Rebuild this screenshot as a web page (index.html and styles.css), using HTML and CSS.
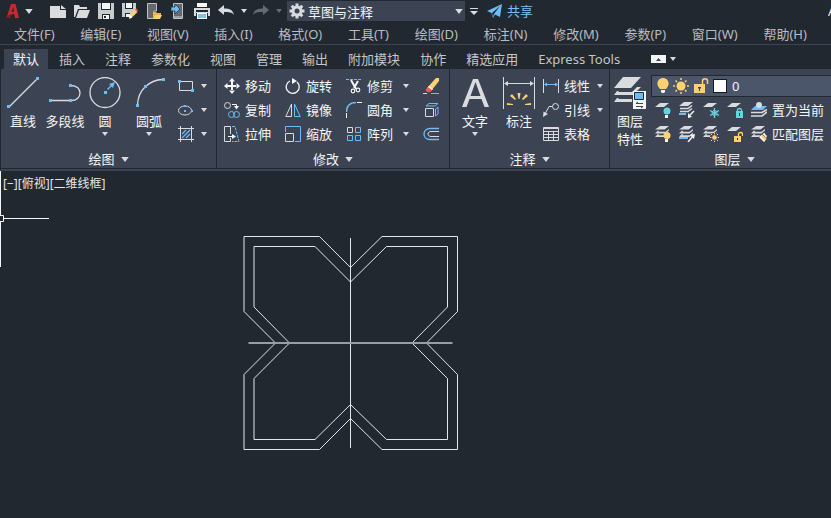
FILE: index.html
```html
<!DOCTYPE html>
<html lang="zh-CN">
<head>
<meta charset="utf-8">
<title>草图与注释</title>
<link rel="stylesheet" href="styles.css">
</head>
<body>
<svg class="defs" aria-hidden="true">
  <symbol id="caret" viewBox="0 0 6 4"><path d="M0 0h6L3 4z" fill="currentColor"/></symbol>
  <symbol id="sheets" viewBox="0 0 16 16"><path d="M6 0h10l-5 4H0zM3 5.500h2l-1 1h8l4-3v1.500l-4 3.500H0zM3 9.500h2l-1 1h8l4-3V9l-4 3.500H0z" fill="#d9dbde"/></symbol>
</svg>

<header class="titlebar">
  <button class="app" aria-label="应用程序菜单"><svg width="16" height="16" viewBox="0 0 16 16"><path d="M1.500 15 6 1h4.500l3.500 14h-4l-.8-4.200L5.500 12l-1 3z" fill="#c52a2e"/><path d="M6.500 9.200 8.200 4l.9 4.500z" fill="#222830"/><path d="m1.500 15 2-3 5-2-3.500 2-1 3z" fill="#8f1418"/></svg><svg class="caret big"><use href="#caret"/></svg></button>
  <button class="tool" aria-label="新建"><svg width="16" height="16"><path d="M0 3h10v4h6v8H0z" fill="#d9dbde"/><path d="m11 2 5 4h-5z" fill="#d9dbde"/></svg></button>
  <button class="tool" aria-label="打开"><svg width="16" height="16"><path d="M0 2h5l1 2h7v2H4L1 14H0z" fill="#d9dbde"/><path d="M5 7h11l-3 8H2z" fill="#d9dbde"/></svg></button>
  <button class="tool" aria-label="保存"><svg width="16" height="16"><path d="M0 0h16v16H0z" fill="#c9cccf"/><path d="M3 0h10v7H3zM4 11h8v5H4z" fill="#222830"/><path d="M4 0h8v6H4zM5 12h6v4H5z" fill="#f4f5f6"/><path d="M6 13h2v2H6z" fill="#222830"/></svg></button>
  <button class="tool" aria-label="另存为"><svg width="16" height="16"><path d="M0 0h14v8l-6 6H0z" fill="#c9cccf"/><path d="M3 0h8v6H3zM3 10h5v5H3z" fill="#222830"/><path d="M4 0h6v5H4zM4 11h4v3H4z" fill="#f4f5f6"/><path d="m7 15 1.500-4L13 6.500l2.500 2.500L11 13.500z" fill="#ffcf73"/><path d="m13 6.500 1.500-1L16 7.500 15 9z" fill="#f05a4f"/><path d="m7 16 1-4 2.500 2.500z" fill="#fff"/></svg></button>
  <button class="tool" aria-label="从移动设备打开"><svg width="16" height="16"><path d="M1.500.500h9V8H8v7.500H1.500z" fill="#666a70" stroke="#bfc2c6"/><path d="M7 9h3l1 1h4v2h-4l-3 4H7z" fill="#e8b45a"/><path d="M9.500 12H16l-2 4H7.500z" fill="#ffcf73"/></svg></button>
  <button class="tool" aria-label="保存到移动设备"><svg width="16" height="16"><path d="M3.500.500h9v15h-9z" fill="#666a70" stroke="#bfc2c6"/><path d="M4 13h8v2H4z" fill="#9b9ea3"/><path d="M1 4h4V1l5 5-5 5V8H1z" fill="#6cbcf7" stroke="#222830" stroke-width=".7"/></svg></button>
  <button class="tool" aria-label="打印"><svg width="16" height="16"><path d="M3 0h10v4H3z" fill="#f6f6f6"/><path d="M0 5h16v8H0z" fill="#d9dbde"/><path d="M2 7h12v2H2zM2 10h12v6H2z" fill="#222830"/><path d="M3 10h10v6H3z" fill="#fff"/><path d="M4 11h8v4H4z" fill="#7cc4f5"/></svg></button>
  <button class="tool" aria-label="放弃"><svg width="16" height="12"><path d="m0 5 6-5v3.500c5 0 9 1 10 6.500-2-3-5-3-10-3V10z" fill="#d9dbde"/></svg></button>
  <button class="drop" aria-label="放弃列表"><svg class="caret"><use href="#caret"/></svg></button>
  <button class="tool off" aria-label="重做"><svg width="16" height="12"><path d="m16 5-6-5v3.500c-5 0-9 1-10 6.500 2-3 5-3 10-3V10z" fill="currentColor"/></svg></button>
  <button class="drop off" aria-label="重做列表"><svg class="caret"><use href="#caret"/></svg></button>
  <label class="workspace">
    <svg width="16" height="16" viewBox="-8 -8 16 16" aria-label="工作空间"><g fill="#d9dbde"><path id="cog" d="M-1.500-7.500h3v15h-3z"/><use href="#cog" transform="rotate(45)"/><use href="#cog" transform="rotate(90)"/><use href="#cog" transform="rotate(135)"/><circle r="5.500"/></g><circle r="2.500" fill="#3c4453"/></svg>
    <select><option>草图与注释</option></select>
    <svg class="caret big"><use href="#caret"/></svg>
  </label>
  <button class="custom" aria-label="自定义快速访问工具栏"><svg width="8" height="7"><path d="M0 0h8v1H0zM0 3h8L4 7z" fill="#d9dbde"/></svg></button>
  <a class="share" href="#"><svg width="16" height="15"><path d="M0 7 15 0l-2 13-5-2.500L6 14l-1.500-5z" fill="#6cbcf7"/><path d="m5 9 8-7-6 8-1 3z" fill="#222830"/></svg>共享</a>
  <span class="title">A</span>
</header>

<nav class="menubar">
  <button>文件(F)</button><button>编辑(E)</button><button>视图(V)</button><button>插入(I)</button><button>格式(O)</button><button>工具(T)</button><button>绘图(D)</button><button>标注(N)</button><button>修改(M)</button><button>参数(P)</button><button>窗口(W)</button><button>帮助(H)</button>
</nav>

<nav class="tabs">
  <button class="active">默认</button><button>插入</button><button>注释</button><button>参数化</button><button>视图</button><button>管理</button><button>输出</button><button>附加模块</button><button>协作</button><button>精选应用</button><button>Express Tools</button>
  <button class="minimize" aria-label="最小化功能区"><svg width="15" height="8"><path d="M0 0h15v8H0z" fill="#f4f4f4"/><path d="m5 6 2.500-3L10 6z" fill="#3c4453"/></svg><svg class="caret"><use href="#caret"/></svg></button>
</nav>

<div class="ribbon">
  <section class="panel">
    <div class="tools">
      <button class="large"><svg width="32" height="32"><path d="m2 30 28-28" stroke="#d9dbde" stroke-width="1.300"/><path d="M0 28h3v3H0zM29 0h3v3h-3z" fill="#6cbcf7"/></svg>直线</button>
      <button class="large mid"><svg width="32" height="32"><path d="M2 23.500h20c12 0 12-15 0-15" fill="none" stroke="#d9dbde" stroke-width="1.300"/><path d="M0 22h3v3H0zM20 22h3v3h-3zM20 7h3v3h-3z" fill="#6cbcf7"/></svg>多段线</button>
      <button class="large mid"><svg width="32" height="32"><circle cx="16" cy="15.500" r="15" fill="none" stroke="#d9dbde" stroke-width="1.300"/><path d="M15 14h3v3h-3zM18 12l4-4 1 1-4 4zM20 7l6-2-2 6z" fill="#6cbcf7"/></svg>圆<svg class="caret"><use href="#caret"/></svg></button>
      <button class="large wide"><svg width="32" height="32"><path d="M4.500 28C5 13 16 3 30 2.500" fill="none" stroke="#d9dbde" stroke-width="1.300"/><path d="M3 27h3v3H3zM11 8h3v3h-3zM29 1h3v3h-3z" fill="#6cbcf7"/></svg>圆弧<svg class="caret"><use href="#caret"/></svg></button>
      <div class="column shapes">
        <button class="small" aria-label="矩形"><svg width="16" height="16"><path d="M1.500 3.500h13v9h-13z" fill="none" stroke="#d9dbde"/><path d="M0 2h3v3H0zM13 11h3v3h-3z" fill="#6cbcf7"/></svg><svg class="caret"><use href="#caret"/></svg></button>
        <button class="small" aria-label="椭圆"><svg width="16" height="16"><ellipse cx="7" cy="8.500" rx="6.500" ry="4.500" fill="none" stroke="#d9dbde"/><path d="M6 3h2v2H6zM6 8h2v2H6zM13 8h2v2h-2z" fill="#6cbcf7"/></svg><svg class="caret"><use href="#caret"/></svg></button>
        <button class="small" aria-label="图案填充"><svg width="16" height="16"><path d="M0 2.500h16M0 13.500h16M2.500 0v16M13.500 0v16" stroke="#d9dbde"/><path d="m4 8 4-4M4 12l8-8M8 12l4-4" stroke="#6cbcf7" stroke-width="1.300"/></svg><svg class="caret"><use href="#caret"/></svg></button>
      </div>
    </div>
    <button class="footer">绘图<svg class="caret big"><use href="#caret"/></svg></button>
  </section>

  <section class="panel modify">
    <div class="tools">
      <div class="column">
        <button class="small"><svg width="16" height="16" fill="#f4f5f6"><path d="M7 3h2v4h4v2H9v4H7V9H3V7h4zM8 0l3 3.500H5zM8 16l3-3.500H5zM0 8l3.500-3v6zM16 8l-3.500-3v6z"/></svg>移动</button>
        <button class="small"><svg width="16" height="16" fill="none"><circle cx="3.500" cy="3.500" r="3" stroke="#d9dbde"/><circle cx="7.500" cy="12.500" r="3" stroke="#6cbcf7"/><circle cx="12.500" cy="12.500" r="3" stroke="#6cbcf7"/><path d="M8 2.500h4.500V5" stroke="#f4f5f6"/><path d="M10 4h5l-2.500 3.500z" fill="#f4f5f6"/></svg>复制</button>
        <button class="small"><svg width="16" height="16" fill="none"><path d="M6.500 8V.5h-6v15h6V12" stroke="#d9dbde"/><path d="M8 .5h3l4 15H8" stroke="#6cbcf7" stroke-dasharray="3 1"/><path d="M4 10.500h5" stroke="#f4f5f6"/><path d="m8 8 4 2.500L8 13z" fill="#f4f5f6"/></svg>拉伸</button>
      </div>
      <div class="column">
        <button class="small"><svg width="16" height="16" fill="none"><path d="M5 3a6.500 6.500 0 1 0 7 1" stroke="#f4f5f6" stroke-width="1.300"/><path d="M7 0v6l5-3z" fill="#f4f5f6"/></svg>旋转</button>
        <button class="small"><svg width="16" height="16" fill="none"><path d="M6.500 2v12.500H.8z" stroke="#d9dbde"/><path d="M9.500 2v12.500h5.700z" stroke="#6cbcf7"/></svg>镜像</button>
        <button class="small"><svg width="16" height="16" fill="none"><path d="M.5 6V.5h15v15H10" stroke="#6cbcf7"/><path d="M.5 7.500h8v8h-8z" stroke="#d9dbde"/></svg>缩放</button>
      </div>
      <div class="column trim">
        <button class="small"><svg width="16" height="16" fill="none"><path d="M0 1.500h16" stroke="#6cbcf7" stroke-dasharray="3 1"/><path d="m5 2 5 9M12 3l-4 7" stroke="#f4f5f6" stroke-width="2"/><circle cx="7" cy="13" r="1.800" stroke="#f4f5f6" stroke-width="1.200"/><circle cx="12" cy="12" r="1.800" stroke="#f4f5f6" stroke-width="1.200"/></svg>修剪<svg class="caret"><use href="#caret"/></svg></button>
        <button class="small"><svg width="16" height="16" fill="none"><path d="M.5 10C.5 4 4 .5 10 .5" stroke="#6cbcf7" stroke-width="1.300"/><path d="M11 .5h5M.5 11v5" stroke="#f4f5f6"/></svg>圆角<svg class="caret"><use href="#caret"/></svg></button>
        <button class="small"><svg width="16" height="16" fill="none"><path d="M1.500 1.500h5v5h-5z" stroke="#d9dbde"/><path d="M9.500 1.500h5v5h-5zM1.500 9.500h5v5h-5zM9.500 9.500h5v5h-5z" stroke="#6cbcf7"/></svg>阵列<svg class="caret"><use href="#caret"/></svg></button>
      </div>
      <div class="column">
        <button class="small" aria-label="删除"><svg width="16" height="16"><path d="M13 0h3v3L8 13l-4-3z" fill="#ffcf73"/><path d="m5.500 8.500 4 3L7 14c-2 1-5-1-4-3z" fill="#f05a4f"/><path d="m5 9 1-1 4 3-1 1z" fill="#fff"/><path d="M0 15.500h4" stroke="#d9dbde"/><path d="M8 15.500h8" stroke="#6cbcf7"/></svg></button>
        <button class="small" aria-label="分解"><svg width="16" height="16" fill="none"><path d="M2.500 6.500h8v8h-8z" stroke="#d9dbde"/><path d="m3 4 3-2.500h9L12 4zM12.500 7 15 5v7l-2.500 2z" stroke="#6cbcf7"/></svg></button>
        <button class="small" aria-label="偏移"><svg width="16" height="16" fill="none"><path d="M16 2.500H7c-8 0-8 11 0 11h9" stroke="#6cbcf7" stroke-width="1.300"/><path d="M16 5.500H8c-4 0-4 5 0 5h8" stroke="#d9dbde"/></svg></button>
      </div>
    </div>
    <button class="footer">修改<svg class="caret big"><use href="#caret"/></svg></button>
  </section>

  <section class="panel annotate">
    <div class="tools">
      <button class="large"><svg width="32" height="32"><path d="M3 30 14 2h5l11 28h-4.500l-3-8h-12l-3 8zM11.500 19h10l-5-14z" fill="#d9dbde"/></svg>文字<svg class="caret"><use href="#caret"/></svg></button>
      <button class="large"><svg width="32" height="32"><path d="M.5 0v32M31.500 0v32M2 6.500h28" stroke="#d9dbde"/><path d="m1 6.500 4-2.500v5zM31 6.500 27 4v5z" fill="#d9dbde"/><path d="M14.500 16h3l-1 6h-1zM7 19l2-2 4 5-1 1zM25 19l-2-2-4 5 1 1zM4 26l6 1v1H4zM28 26l-6 1v1h6z" fill="#ffcf73"/></svg>标注</button>
      <div class="column linear">
        <button class="small"><svg width="16" height="16"><path d="M.5 1v14M15.500 1v14" stroke="#d9dbde"/><path d="M2 6.500h12" stroke="#6cbcf7"/><path d="m1 6.500 3-2v4zM15 6.500l-3-2v4z" fill="#6cbcf7"/></svg>线性<svg class="caret"><use href="#caret"/></svg></button>
        <button class="small"><svg width="16" height="16" fill="none"><circle cx="12.500" cy="4.500" r="3" stroke="#d9dbde"/><path d="M9.500 4.500H6L2 12" stroke="#d9dbde"/><path d="m0 15 .500-5.500L5 12z" fill="#d9dbde"/></svg>引线<svg class="caret"><use href="#caret"/></svg></button>
        <button class="small"><svg width="16" height="16" fill="none"><path d="M.5 1.500h15v13H.5zM0 2.500h16M0 5.500h16M0 8.500h16M0 11.500h16M5.500 5v9M10.500 5v9" stroke="#d9dbde"/></svg>表格</button>
      </div>
    </div>
    <button class="footer">注释<svg class="caret big"><use href="#caret"/></svg></button>
  </section>

  <section class="panel layers">
    <div class="tools">
      <button class="large mid"><svg width="32" height="32"><path d="M9 0h18L17 11H0zM3 14h2l-1 1h14l5-5h4l-8 8H0zM3 21h2l-1 1h14v3H0z" fill="#d9dbde"/><path d="M19 14h13v18H19z" fill="#f4f5f6"/><path d="M20.500 15.500h9v7h-9z" fill="#6cbcf7" stroke="#222830"/><path d="M22 26.500h7M22 29.500h7M24 25l-2 1.500M27 31l2-1.500" stroke="#3c4453"/></svg>图层<br>特性</button>
      <div class="layer-tools">
        <label class="layer-select">
          <svg width="12" height="16"><path d="M3 11C-2 6 1 0 6 0s8 6 3 11z" fill="#ffcf73"/><path d="M4 12h4v2l-1 1H5l-1-1z" fill="#f4f5f6"/></svg>
          <svg width="16" height="16" viewBox="-8 -8 16 16"><circle r="4.500" fill="#ffcf73"/><path d="M0-8v2M0 6v2M-8 0h2M6 0h2M-5.500-5.500l1.500 1.500M4 4l1.500 1.500M-5.500 5.500 -4 4M4-4l1.500-1.500" stroke="#ffcf73" stroke-width="1.500"/></svg>
          <svg width="16" height="16"><path d="M9.500 7V3c0-3 5-3 5 0v3" fill="none" stroke="#ffcf73" stroke-width="1.500"/><path d="M1 6h11v9H1z" fill="#ffcf73"/><path d="M5 9h3v1.500H7V13H6v-2.500H5z" fill="#3c4453"/></svg>
          <span class="swatch"></span>
          <select aria-label="图层"><option>0</option></select>
        </label>
        <div class="row">
          <button class="icon" aria-label="关"><svg width="16" height="16"><path d="M5 1h9L9 5H0z" fill="#d9dbde"/><circle cx="12" cy="9" r="3.500" fill="#66d5dd"/><path d="M10 13h3v3h-3z" fill="#f4f5f6"/></svg></button>
          <button class="icon" aria-label="隔离"><svg width="16" height="16"><path d="M5 0h9L9 4H0z" fill="#d9dbde"/><path d="m1 6.500 8 0 4-3M1 9.500h8l4-3" fill="none" stroke="#d9dbde" stroke-width="1.500"/><path d="M0 12h7" stroke="#6cbcf7" stroke-width="2"/><path d="m15 9-4 4" stroke="#f4f5f6" stroke-width="1.500"/><path d="m9 11 4 4-4 1z" fill="#f4f5f6"/></svg></button>
          <button class="icon" aria-label="冻结"><svg width="16" height="16"><path d="M5 1h9L9 5H0z" fill="#d9dbde"/><path d="M11.500 6v10M7 8.500l9 5M7 13.500l9-5" stroke="#66d5dd" stroke-width="1.300"/><circle cx="11.500" cy="11" r="2.500" fill="none" stroke="#66d5dd"/></svg></button>
          <button class="icon" aria-label="锁定"><svg width="16" height="16"><path d="M5 1h9L9 5H0z" fill="#d9dbde"/><path d="M10.500 10V8c0-2 4-2 4 0v2" fill="none" stroke="#66d5dd" stroke-width="1.300"/><path d="M9 9h7v7H9z" fill="#66d5dd"/><path d="M12 11h1v3h-1z" fill="#222830"/></svg></button>
          <button class="small"><svg width="16" height="16"><path d="M4 4h12l-4 4H0z" fill="#6cbcf7"/><circle cx="8" cy="3" r="3" fill="#d9dbde"/><path d="M0 10.500h11l5-3M0 14h11l5-4" fill="none" stroke="#d9dbde" stroke-width="1.700"/></svg>置为当前</button>
        </div>
        <div class="row">
          <button class="icon" aria-label="打开所有图层"><svg width="16" height="16"><use href="#sheets" width="14" height="14"/><circle cx="12" cy="9.500" r="3.500" fill="#ffcf73"/><path d="M10 13h3v3h-3z" fill="#f4f5f6"/></svg></button>
          <button class="icon" aria-label="取消隔离"><svg width="16" height="16"><use href="#sheets" width="14" height="14"/><path d="M0 12h9" stroke="#6cbcf7" stroke-width="2"/><path d="m9 16 5-6" stroke="#f4f5f6" stroke-width="1.500"/><path d="m11 9 5-1-1 5z" fill="#f4f5f6"/></svg></button>
          <button class="icon" aria-label="解冻所有图层"><svg width="16" height="16"><use href="#sheets" width="14" height="14"/><path d="M11.500 7v9M7 11.500h9M8 8l7 7M8 15l7-7" stroke="#3c4453" stroke-width="3"/><path d="M11.500 7v9M7 11.500h9M8 8l7 7M8 15l7-7" stroke="#ffcf73"/><circle cx="11.500" cy="11.500" r="2.800" fill="#ffcf73" stroke="#3c4453"/></svg></button>
          <button class="icon" aria-label="解锁"><svg width="16" height="16"><path d="M5 1h9L9 5H0z" fill="#d9dbde"/><path d="M11.500 11V8c0-2 4-2 4 0v2" fill="none" stroke="#ffcf73" stroke-width="1.300"/><path d="M7 10h7v6H7z" fill="#ffcf73"/><path d="M10 12h1v2h-1z" fill="#222830"/></svg></button>
          <button class="small"><svg width="16" height="16"><use href="#sheets" width="14" height="14"/><path d="m8 11 3-3 5 5-3 3z" fill="#ffcf73" stroke="#3c4453" stroke-width=".5"/><path d="m12 8 1-1 3 3-1 2zM8 11l2-1 4 5-1 1z" fill="#f4f5f6"/></svg>匹配图层</button>
        </div>
      </div>
    </div>
    <button class="footer">图层<svg class="caret big"><use href="#caret"/></svg></button>
  </section>
</div>

<main class="canvas">
  <div class="view-label"><button>[−]</button><button>[俯视]</button><button>[二维线框]</button></div>
  <svg class="crosshair" width="50" height="96" fill="none" stroke="#f4f5f6"><path d="M.5 0v44M.5 51v45M4 47.500h45"/><path d="M-1 44.500h4.500v6H-1z"/></svg>
  <svg class="drawing" width="216" height="216" fill="none" stroke="#e4e6e8">
    <path d="M1 .5H76.500L107.500 31.500 139 .5H214.500V75.500L183.500 107 214.500 138.500V213.500H139L107.500 182.500 76.500 213.500H1V138.500L32.500 107 1 75.500z"/>
    <path d="M11 10.500H72L107.500 46 143.500 10.500H204.500V71L169 107 204.500 142.500V203.500H143.500L107.500 168.500 72 203.500H11V142.500L46.500 107 11 71z"/>
    <path d="M107.500 2v210"/><path d="M5.500 107h204" stroke="#9a9da1" stroke-width="2"/>
  </svg>
</main>
</body>
</html>
```

FILE: styles.css
```css
* { box-sizing: border-box; }

body {
  margin: 0;
  min-height: 100vh;
  display: flex;
  flex-direction: column;
  overflow: hidden;
  background: #222830;
  color: #f4f5f6;
  font: 13px/18px "Noto Sans", "Noto Sans CJK SC", sans-serif;
}

button, select {
  margin: 0;
  padding: 0;
  border: 0;
  background: none;
  color: inherit;
  font: inherit;
  white-space: nowrap;
}

svg { flex: none; display: block; }
.defs { position: absolute; width: 0; height: 0; }
.caret { width: 6px; height: 4px; color: #d9dbde; }
.caret.big { width: 8px; height: 5px; }

/* Quick access bar */
.titlebar { display: flex; align-items: center; height: 22px; }
.titlebar button { display: flex; align-items: center; justify-content: center; height: 22px; }
.app { width: 38px; gap: 4px; margin-right: 8px; }
.tool { width: 24px; }
.drop { width: 11px; }
.titlebar .off, .off .caret { color: #666b73; }
.workspace {
  display: flex;
  align-items: center;
  width: 178px;
  height: 20px;
  margin-left: 3px;
  padding: 0 2px;
  background: #3c4453;
}
.workspace select { flex: 1; height: 20px; padding: 2px 0 0 3px; appearance: none; }
.custom { width: 18px; }
.share {
  display: flex;
  align-items: center;
  gap: 4px;
  margin-left: 4px;
  color: #7cc0ee;
  text-decoration: none;
}
.title { width: 3px; margin-left: auto; overflow: hidden; }

/* Menus and ribbon tabs */
.menubar {
  display: flex;
  align-items: center;
  justify-content: space-between;
  height: 23px;
  padding: 2px 24px 0 14px;
  border-bottom: 1px solid #3c4453;
  color: #b9bcc1;
}
.tabs {
  display: flex;
  align-items: flex-end;
  gap: 2px;
  height: 24px;
  padding-left: 4px;
  color: #c3c6ca;
}
.tabs button { height: 20px; padding: 0 9px; }
.tabs .active { background: #3c4453; color: #f4f5f6; }
.tabs .minimize { display: flex; align-items: center; gap: 4px; margin-left: 11px; }

/* Ribbon */
.ribbon {
  display: flex;
  height: 102px;
  overflow: hidden;
  background: #3c4453;
  border-left: 1px solid #222830;
  border-bottom: 2px solid #3c4453;
}
.panel {
  display: flex;
  flex-direction: column;
  flex: none;
  width: 216px;
  border-right: 1px solid #222830;
  border-bottom: 1px solid #222830;
}
.modify { width: 233px; }
.annotate { width: 160px; }
.layers { width: 250px; }
.tools { display: flex; height: 78px; padding-top: 5px; overflow: hidden; }
.large {
  display: flex;
  flex-direction: column;
  align-items: center;
  width: 44px;
  padding-top: 3px;
}
.large > svg:first-child { margin-bottom: 3px; }
.large .caret { margin-top: 2px; }
.large.mid { width: 40px; }
.large.wide { width: 48px; }
.column { display: flex; flex-direction: column; }
.small { display: flex; align-items: center; gap: 5px; height: 24px; }
.shapes { padding-left: 5px; }
.modify .tools { padding-left: 7px; gap: 14px; }
.modify .trim { width: 63px; }
.small .caret { margin-left: 5px; }
.shapes .caret, .linear .caret { margin-left: 2px; }
.annotate .tools { padding-left: 3px; }
.linear { padding-left: 2px; }
.footer {
  display: flex;
  align-items: center;
  justify-content: center;
  gap: 6px;
  height: 22px;
  padding-top: 4px;
}

.layer-select {
  display: flex;
  align-items: center;
  gap: 4px;
  height: 22px;
  margin-bottom: 1px;
  padding-left: 5px;
  background: #4b566b;
  border: 1px solid #222830;
}
.layer-tools { flex: 1; padding-top: 1px; margin-left: 1px; }
.layer-select select { flex: 1; padding-left: 1px; appearance: none; }
.swatch { width: 14px; height: 14px; background: #fff; border: 1px solid #15191f; }
.row { display: flex; padding-left: 4px; }
.icon { width: 24px; height: 24px; }

/* Model space */
.canvas { position: relative; flex: 1; }
.view-label { display: flex; padding: 4px 3px; font-size: 12px; color: #e4e6e8; }
.crosshair { position: absolute; left: 0; top: 0; }
.drawing { position: absolute; left: 243px; top: 65px; }
```
